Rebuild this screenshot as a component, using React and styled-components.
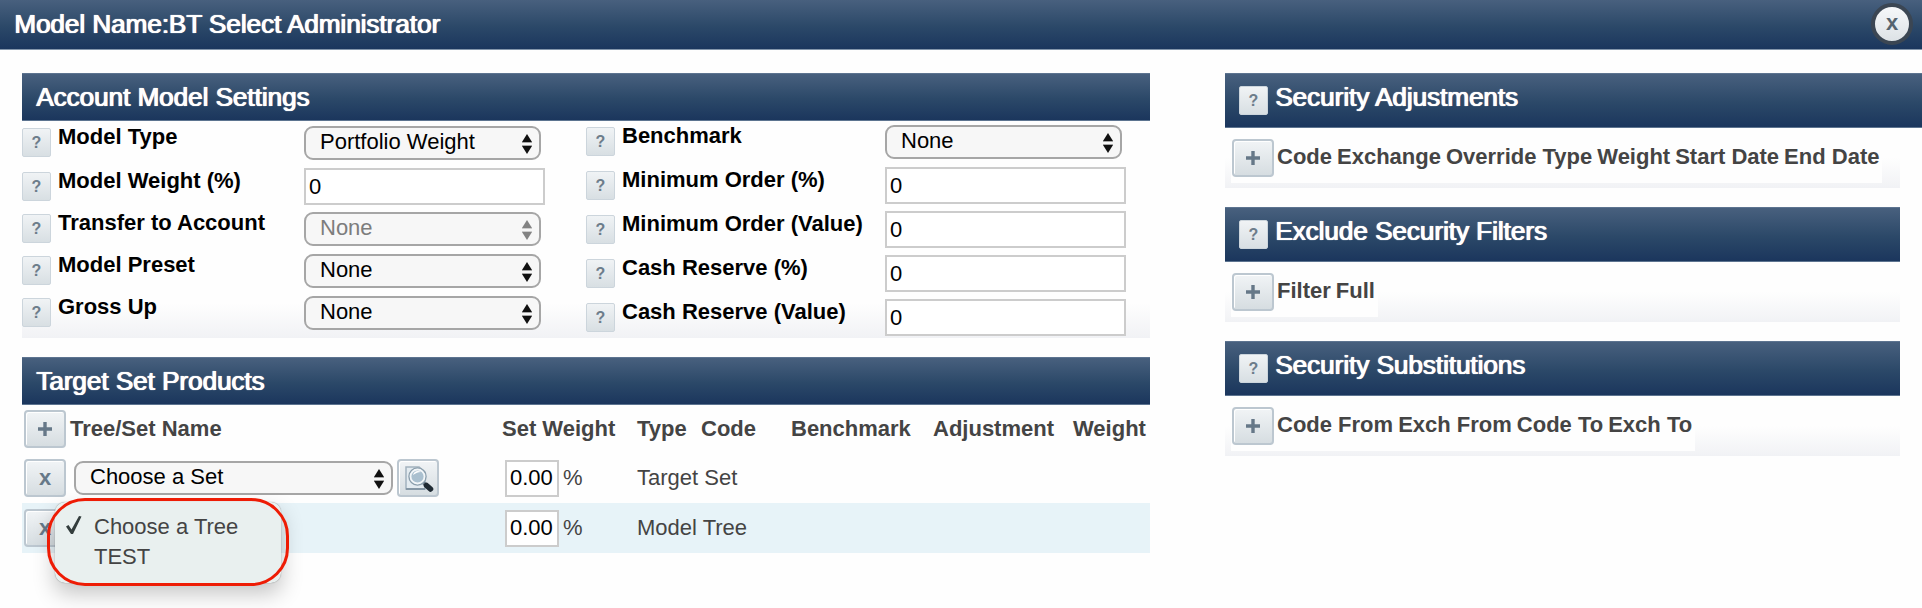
import React, { useState } from "react";
import styled, { createGlobalStyle } from "styled-components";

const GlobalStyle = createGlobalStyle`
  *, *::before, *::after {
    box-sizing: border-box;
  }
  body {
    margin: 0;
    background: #fefefe;
    color: #444;
    font-family: "Liberation Sans", Arial, Helvetica, sans-serif;
    font-size: 22px;
    line-height: 26px;
  }
  button, input, select {
    font: inherit;
    margin: 0;
  }
`;

const TitleBar = styled.header`
  display: flex;
  align-items: center;
  justify-content: space-between;
  height: 50px;
  padding: 0 9px 2px 14px;
  background: linear-gradient(#48607e, #2b4868 55%, #1b365d);
  border-bottom: 1px solid #8496ab;
`;

const Title = styled.h1`
  margin: 0;
  color: #fff;
  font-size: 26px;
  font-weight: 400;
  line-height: 30px;
  text-shadow: 1px 0 0 #fff, 0 0 1px #fff;
`;

const CloseButton = styled.button`
  display: grid;
  place-items: center;
  width: 42px;
  height: 42px;
  padding: 0 0 2px;
  border: 4px solid #3b4653;
  border-radius: 50%;
  background: linear-gradient(#f6f8fa, #dde2e6);
  color: #56646f;
  font-weight: 700;
`;

const Page = styled.main`
  display: grid;
  grid-template-columns: 1128fr 697fr;
  column-gap: 75px;
  align-items: start;
  padding: 23px 0 55px 22px;
`;

const Column = styled.div`
  display: grid;
  gap: 19px;
`;

const Panel = styled.section`
  margin-right: ${(props) => (props.$inset ? "22px" : "0")};
`;

const PanelHeader = styled.div`
  display: flex;
  align-items: flex-start;
  gap: 7px;
  height: ${(props) => (props.$tall ? "55px" : "48px")};
  margin-right: ${(props) => (props.$bleed ? "-22px" : "0")};
  padding: 8px 14px;
  background: linear-gradient(#48607e, #2b4868 55%, #1b365d);
  border: 1px solid #5d7490;
  border-width: 1px 0;
`;

const PanelTitle = styled.h2`
  margin: 0;
  color: #fff;
  font-size: 26px;
  font-weight: 400;
  line-height: 30px;
  text-shadow: 1px 0 0 #fff, 0 0 1px #fff;
`;

const HelpButton = styled.button`
  width: 29px;
  height: 29px;
  margin-top: ${(props) => (props.$low ? "4px" : "0")};
  padding: 0;
  border: 1px solid #ccd5dc;
  border-radius: 2px;
  background: linear-gradient(#f0f3f5, #d8dfe3);
  color: #6d7d8b;
  font-size: 16px;
  font-weight: 700;
  line-height: 26px;
`;

const SettingsBody = styled.div`
  display: grid;
  grid-template-columns: 1fr 1fr;
  align-items: start;
  height: 217px;
  background: linear-gradient(#fefefe 84%, #f1f2f5);
`;

const FieldList = styled.div`
  display: grid;
  padding-top: ${(props) => props.$top}px;
`;

const Label = styled.label`
  color: #000;
  font-weight: 700;
  line-height: 22px;
`;

const TextInput = styled.input`
  width: ${(props) => props.$width}px;
  height: 37px;
  padding: 0 0 0 3px;
  border: 2px solid #ccc;
  background: #fff;
  color: #000;
`;

const Field = styled.div`
  display: grid;
  grid-template-columns: 29px ${(props) => props.$label}px 1fr;
  column-gap: 7px;
  align-items: start;
  height: ${(props) => props.$height}px;

  ${HelpButton} {
    margin-top: 2px;
  }

  ${TextInput} {
    margin-top: -2px;
  }
`;

const SelectWrap = styled.div`
  position: relative;
  width: ${(props) => props.$width}px;

  svg {
    position: absolute;
    top: 8px;
    right: 8px;
    pointer-events: none;
    opacity: ${(props) => (props.$disabled ? 0.5 : 1)};
  }
`;

const Select = styled.select`
  display: block;
  width: 100%;
  height: 34px;
  padding: 0 28px 2px 14px;
  border: 2px solid #a6a6a6;
  border-radius: 9px;
  background: #f7f7f7;
  color: #000;
  appearance: none;

  &:disabled {
    color: #7d7d7d;
    opacity: 1;
  }
`;

const ToolButton = styled.button`
  display: grid;
  place-items: center;
  width: 42px;
  height: 38px;
  padding: 0;
  border: 2px solid #bcc7d0;
  border-radius: 4px;
  background: linear-gradient(#f1f4f6, #d6dde1);
  box-shadow: inset 1px 1px 0 #fff;
  color: #667888;
  font-weight: 700;
  line-height: 22px;
`;

const ProductTable = styled.table`
  width: 100%;
  border-collapse: collapse;
  table-layout: fixed;

  th, td {
    padding: 0;
    text-align: left;
    white-space: nowrap;
  }
`;

const ProductRow = styled.tr`
  height: ${(props) => (props.$head ? "48px" : "50px")};
  background: ${(props) => (props.$active ? "#e7f3f8" : "transparent")};
`;

const ActionCell = styled.td`
  && {
    padding-left: 2px;
  }
`;

const CellGroup = styled.div`
  position: relative;
  display: flex;
  align-items: center;
  gap: 4px;
  height: 38px;
  padding-left: ${(props) => props.$indent}px;
`;

// the red ring is drawn over the open menu, so its square-ish corners show outside
const Highlight = styled.div`
  position: absolute;
  z-index: 2;
  top: -11px;
  left: -23px;
  width: 242px;
  padding: 4px 8px 3px;

  &::after {
    content: "";
    position: absolute;
    inset: 0;
    border: 3px solid #ee1c05;
    border-radius: 38px;
    pointer-events: none;
  }
`;

const Menu = styled.ul`
  height: 81px;
  margin: 0;
  padding: 10px 0 0;
  border-radius: 10px;
  background: #e9f0ef;
  box-shadow: 0 10px 22px rgba(0, 0, 0, 0.24), 0 0 1px rgba(0, 0, 0, 0.5);
  list-style: none;
`;

const MenuItem = styled.li`
  display: grid;
  grid-template-columns: 29px 1fr;
  align-items: center;
  height: 30px;
  padding-left: 10px;
`;

const GradientBody = styled.div`
  height: 60px;
  padding: 5px 6px;
  background: linear-gradient(#fefefe 50%, #f1f2f5);
`;

const HeadTable = styled.table`
  border-spacing: 0;
  height: 50px;
  background: #fefefe;

  th {
    padding: 0 3px 3px 2px;
    white-space: nowrap;
  }
`;

const Arrows = () => (
  <svg width="12" height="20" viewBox="0 0 12 20" aria-hidden="true">
    <path d="M6 0 11 8H1zM6 20 1 12h10z" fill="#111" />
    <path d="M1 8.5h10M1 11.5h10" stroke="#111" strokeOpacity="0.35" />
  </svg>
);

const PlusIcon = () => (
  <svg width="16" height="16" viewBox="0 0 16 16" aria-hidden="true">
    <path d="M8 1v14M1 8h14" stroke="#667888" strokeWidth="3.4" />
  </svg>
);

const SearchIcon = () => (
  <svg width="32" height="30" viewBox="0 0 32 30" aria-hidden="true">
    <path d="M4 4h13l6 5v17H4z" fill="#e3ebf0" stroke="#a3b2be" strokeWidth="1.5" />
    <path d="M4 26h19" stroke="#8597a5" strokeWidth="2" />
    <path d="m21.5 20 3 2.5" stroke="#5b6b78" strokeWidth="3.5" />
    <path d="m24.5 22.5 4 3.5" stroke="#1f2a33" strokeWidth="5.5" strokeLinecap="round" />
    <circle cx="15.5" cy="13.5" r="8.5" fill="#aac0cf" stroke="#8b9eac" strokeWidth="1.5" />
    <circle cx="15.5" cy="13.5" r="7" fill="none" stroke="#f2f6f8" strokeWidth="1.8" />
    <path d="M11 12c1-4 5-5 8-3-3 0-5 1-8 3z" fill="#fff" />
  </svg>
);

const CheckIcon = () => (
  <svg width="17" height="20" viewBox="0 0 17 20" aria-hidden="true">
    <path d="M1 12.5 3.5 11l3 4.5L14 2l2.5.6L8 20H6z" fill="#333d3d" />
  </svg>
);

const leftFields = [
  { id: "modelType", label: "Model Type", options: ["Portfolio Weight"], height: 44 },
  { id: "modelWeight", label: "Model Weight (%)", height: 42 },
  { id: "transfer", label: "Transfer to Account", options: ["None"], disabled: true, height: 42 },
  { id: "preset", label: "Model Preset", options: ["None"], height: 42 },
  { id: "grossUp", label: "Gross Up", options: ["None"], height: 42 },
];

const rightFields = [
  { id: "benchmark", label: "Benchmark", options: ["None"], height: 44 },
  { id: "minOrderPct", label: "Minimum Order (%)", height: 44 },
  { id: "minOrderValue", label: "Minimum Order (Value)", height: 44 },
  { id: "cashPct", label: "Cash Reserve (%)", height: 44 },
  { id: "cashValue", label: "Cash Reserve (Value)", height: 44 },
];

const sidePanels = [
  {
    title: "Security Adjustments",
    columns: ["Code", "Exchange", "Override Type", "Weight", "Start Date", "End Date"],
    bleed: true,
  },
  { title: "Exclude Security Filters", columns: ["Filter", "Full"] },
  { title: "Security Substitutions", columns: ["Code From", "Exch From", "Code To", "Exch To"] },
];

const SelectBox = ({ id, label, options, disabled, width }) => (
  <SelectWrap $width={width} $disabled={disabled}>
    <Select id={id} aria-label={label} disabled={disabled}>
      {options.map((option) => (
        <option key={option}>{option}</option>
      ))}
    </Select>
    <Arrows />
  </SelectWrap>
);

const Fields = ({ fields, labelWidth, top }) => (
  <FieldList $top={top}>
    {fields.map((field) => (
      <Field key={field.id} $label={labelWidth} $height={field.height}>
        <HelpButton type="button" aria-label={`Help: ${field.label}`}>?</HelpButton>
        <Label htmlFor={field.id}>{field.label}</Label>
        {field.options ? (
          <SelectBox id={field.id} options={field.options} disabled={field.disabled} width={237} />
        ) : (
          <TextInput id={field.id} type="text" defaultValue="0" $width={241} />
        )}
      </Field>
    ))}
  </FieldList>
);

const WeightCell = ({ label }) => (
  <CellGroup $indent={3}>
    <TextInput type="text" aria-label={label} defaultValue="0.00" $width={54} />%
  </CellGroup>
);

const App = () => {
  const [tree, setTree] = useState("Choose a Tree");

  return (
    <>
      <GlobalStyle />
      <TitleBar>
        <Title>Model Name:BT Select Administrator</Title>
        <CloseButton type="button" aria-label="Close">x</CloseButton>
      </TitleBar>
      <Page>
        <Column>
          <Panel>
            <PanelHeader>
              <PanelTitle>Account Model Settings</PanelTitle>
            </PanelHeader>
            <SettingsBody>
              <Fields fields={leftFields} labelWidth={239} top={5} />
              <Fields fields={rightFields} labelWidth={256} top={4} />
            </SettingsBody>
          </Panel>
          <Panel>
            <PanelHeader>
              <PanelTitle>Target Set Products</PanelTitle>
            </PanelHeader>
            <ProductTable>
              <colgroup>
                <col width="48" />
                <col />
                <col width="135" />
                <col width="64" />
                <col width="90" />
                <col width="142" />
                <col width="140" />
                <col width="77" />
              </colgroup>
              <thead>
                <ProductRow $head>
                  <ActionCell>
                    <ToolButton type="button" aria-label="Add product"><PlusIcon /></ToolButton>
                  </ActionCell>
                  <th>Tree/Set Name</th>
                  <th>Set Weight</th>
                  <th>Type</th>
                  <th>Code</th>
                  <th>Benchmark</th>
                  <th>Adjustment</th>
                  <th>Weight</th>
                </ProductRow>
              </thead>
              <tbody>
                <ProductRow>
                  <ActionCell>
                    <ToolButton type="button" aria-label="Remove set">x</ToolButton>
                  </ActionCell>
                  <td>
                    <CellGroup $indent={4}>
                      <SelectBox label="Set" options={["Choose a Set"]} width={319} />
                      <ToolButton type="button" aria-label="Search sets"><SearchIcon /></ToolButton>
                    </CellGroup>
                  </td>
                  <td><WeightCell label="Set weight" /></td>
                  <td colSpan={5}>Target Set</td>
                </ProductRow>
                <ProductRow $active>
                  <ActionCell>
                    <ToolButton type="button" aria-label="Remove tree">x</ToolButton>
                  </ActionCell>
                  <td>
                    <CellGroup $indent={4}>
                      <Highlight>
                        <Menu role="listbox" aria-label="Tree">
                          {["Choose a Tree", "TEST"].map((name) => (
                            <MenuItem
                              key={name}
                              role="option"
                              aria-selected={tree === name}
                              onClick={() => setTree(name)}
                            >
                              <span>{tree === name && <CheckIcon />}</span>
                              {name}
                            </MenuItem>
                          ))}
                        </Menu>
                      </Highlight>
                    </CellGroup>
                  </td>
                  <td><WeightCell label="Tree weight" /></td>
                  <td colSpan={5}>Model Tree</td>
                </ProductRow>
              </tbody>
            </ProductTable>
          </Panel>
        </Column>
        <Column>
          {sidePanels.map((panel) => (
            <Panel key={panel.title} $inset>
              <PanelHeader $tall $bleed={panel.bleed}>
                <HelpButton type="button" $low aria-label={`Help: ${panel.title}`}>?</HelpButton>
                <PanelTitle>{panel.title}</PanelTitle>
              </PanelHeader>
              <GradientBody>
                <HeadTable>
                  <thead>
                    <tr>
                      <td>
                        <ToolButton type="button" aria-label={`Add: ${panel.title}`}><PlusIcon /></ToolButton>
                      </td>
                      {panel.columns.map((column) => (
                        <th key={column}>{column}</th>
                      ))}
                    </tr>
                  </thead>
                </HeadTable>
              </GradientBody>
            </Panel>
          ))}
        </Column>
      </Page>
    </>
  );
};

export default App;
